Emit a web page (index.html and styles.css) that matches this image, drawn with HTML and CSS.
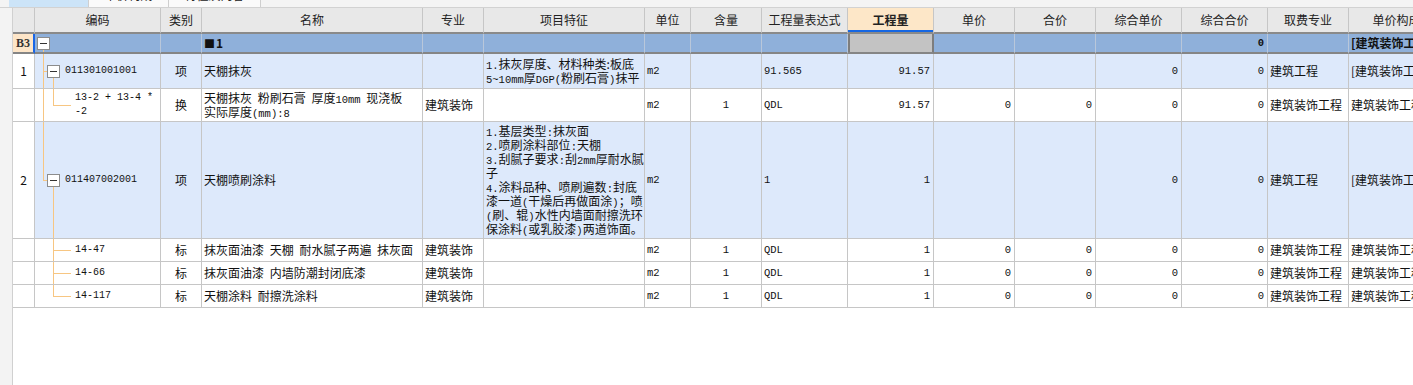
FILE: index.html
```html
<!DOCTYPE html>
<html lang="zh-CN">
<head>
<meta charset="utf-8">
<title>清单</title>
<link rel="stylesheet" href="styles.css">
</head>
<body>
<div class="top">
  <div class="tab t1 on"></div>
  <div class="tab t2"><span>单价构成</span></div>
  <div class="tab t3"><span>特征及内容</span></div>
</div>
<div class="main">
  <div class="gutter"></div>
  <div class="wrap">
    <div class="grid">
      <div class="row hd">
        <div class="c rn"></div>
        <div class="c">编码</div>
        <div class="c">类别</div>
        <div class="c">名称</div>
        <div class="c">专业</div>
        <div class="c">项目特征</div>
        <div class="c">单位</div>
        <div class="c">含量</div>
        <div class="c">工程量表达式</div>
        <div class="c hl">工程量</div>
        <div class="c">单价</div>
        <div class="c">合价</div>
        <div class="c">综合单价</div>
        <div class="c">综合合价</div>
        <div class="c">取费专业</div>
        <div class="c">单价构成文件</div>
      </div>

      <div class="row b3">
        <div class="c rn">B3</div>
        <div class="c tr l0"><span class="tg"></span></div>
        <div class="c"></div>
        <div class="c"><span class="blk">■</span>1</div>
        <div class="c"></div>
        <div class="c"></div>
        <div class="c"></div>
        <div class="c"></div>
        <div class="c"></div>
        <div class="c sel"></div>
        <div class="c"></div>
        <div class="c"></div>
        <div class="c"></div>
        <div class="c rt a">0</div>
        <div class="c"></div>
        <div class="c">[建筑装饰工程]</div>
      </div>

      <div class="row p">
        <div class="c rn">1</div>
        <div class="c tr l1"><span class="tg"></span><span class="cd">011301001001</span></div>
        <div class="c ctr">项</div>
        <div class="c">天棚抹灰</div>
        <div class="c"></div>
        <div class="c"><div class="ml"><span class="a">1.</span>抹灰厚度、材料种类:板底<br><span class="a">5~10mm</span>厚<span class="a">DGP(</span>粉刷石膏<span class="a">)</span>抹平</div></div>
        <div class="c a">m2</div>
        <div class="c"></div>
        <div class="c a">91.565</div>
        <div class="c rt a">91.57</div>
        <div class="c"></div>
        <div class="c"></div>
        <div class="c rt a">0</div>
        <div class="c rt a">0</div>
        <div class="c">建筑工程</div>
        <div class="c">[建筑装饰工程]</div>
      </div>

      <div class="row">
        <div class="c rn"></div>
        <div class="c tr l2"><div class="cd">13-2 + 13-4 *<br>-2</div></div>
        <div class="c ctr">换</div>
        <div class="c nm"><div class="ml">天棚抹灰 粉刷石膏 厚度<span class="a">10mm</span> 现浇板<br>实际厚度<span class="a">(mm):8</span></div></div>
        <div class="c">建筑装饰</div>
        <div class="c"></div>
        <div class="c a">m2</div>
        <div class="c ctr a">1</div>
        <div class="c a">QDL</div>
        <div class="c rt a">91.57</div>
        <div class="c rt a">0</div>
        <div class="c rt a">0</div>
        <div class="c rt a">0</div>
        <div class="c rt a">0</div>
        <div class="c">建筑装饰工程</div>
        <div class="c">建筑装饰工程</div>
      </div>

      <div class="row p">
        <div class="c rn">2</div>
        <div class="c tr l3"><span class="tg"></span><span class="cd">011407002001</span></div>
        <div class="c ctr">项</div>
        <div class="c">天棚喷刷涂料</div>
        <div class="c"></div>
        <div class="c"><div class="ml"><span class="a">1.</span>基层类型<span class="a">:</span>抹灰面<br><span class="a">2.</span>喷刷涂料部位<span class="a">:</span>天棚<br><span class="a">3.</span>刮腻子要求<span class="a">:</span>刮<span class="a">2mm</span>厚耐水腻<br>子<br><span class="a">4.</span>涂料品种、喷刷遍数<span class="a">:</span>封底<br>漆一道<span class="a">(</span>干燥后再做面涂<span class="a">)</span>；喷<br><span class="a">(</span>刷、辊<span class="a">)</span>水性内墙面耐擦洗环<br>保涂料<span class="a">(</span>或乳胶漆<span class="a">)</span>两道饰面。</div></div>
        <div class="c a">m2</div>
        <div class="c"></div>
        <div class="c a">1</div>
        <div class="c rt a">1</div>
        <div class="c"></div>
        <div class="c"></div>
        <div class="c rt a">0</div>
        <div class="c rt a">0</div>
        <div class="c">建筑工程</div>
        <div class="c">[建筑装饰工程]</div>
      </div>

      <div class="row">
        <div class="c rn"></div>
        <div class="c tr l4"><span class="cd">14-47</span></div>
        <div class="c ctr">标</div>
        <div class="c nm">抹灰面油漆 天棚 耐水腻子两遍 抹灰面</div>
        <div class="c">建筑装饰</div>
        <div class="c"></div>
        <div class="c a">m2</div>
        <div class="c ctr a">1</div>
        <div class="c a">QDL</div>
        <div class="c rt a">1</div>
        <div class="c rt a">0</div>
        <div class="c rt a">0</div>
        <div class="c rt a">0</div>
        <div class="c rt a">0</div>
        <div class="c">建筑装饰工程</div>
        <div class="c">建筑装饰工程</div>
      </div>

      <div class="row">
        <div class="c rn"></div>
        <div class="c tr l4"><span class="cd">14-66</span></div>
        <div class="c ctr">标</div>
        <div class="c nm">抹灰面油漆 内墙防潮封闭底漆</div>
        <div class="c">建筑装饰</div>
        <div class="c"></div>
        <div class="c a">m2</div>
        <div class="c ctr a">1</div>
        <div class="c a">QDL</div>
        <div class="c rt a">1</div>
        <div class="c rt a">0</div>
        <div class="c rt a">0</div>
        <div class="c rt a">0</div>
        <div class="c rt a">0</div>
        <div class="c">建筑装饰工程</div>
        <div class="c">建筑装饰工程</div>
      </div>

      <div class="row">
        <div class="c rn"></div>
        <div class="c tr l5"><span class="cd">14-117</span></div>
        <div class="c ctr">标</div>
        <div class="c nm">天棚涂料 耐擦洗涂料</div>
        <div class="c">建筑装饰</div>
        <div class="c"></div>
        <div class="c a">m2</div>
        <div class="c ctr a">1</div>
        <div class="c a">QDL</div>
        <div class="c rt a">1</div>
        <div class="c rt a">0</div>
        <div class="c rt a">0</div>
        <div class="c rt a">0</div>
        <div class="c rt a">0</div>
        <div class="c">建筑装饰工程</div>
        <div class="c">建筑装饰工程</div>
      </div>
    </div>
  </div>
</div>
</body>
</html>
```

FILE: styles.css
```css
* { box-sizing: border-box; }
html, body { margin: 0; padding: 0; }
body {
  width: 1413px;
  height: 385px;
  overflow: hidden;
  background: #fff;
  font-family: "Noto Sans CJK SC", sans-serif;
  font-size: 12px;
  color: #111;
}

.top {
  height: 8px;
  background: #f4f4f4;
  border-bottom: 1px solid #d2d2d2;
  display: flex;
  padding-left: 9px;
}
.tab {
  height: 7px;
  overflow: hidden;
  display: flex;
  justify-content: center;
  align-items: flex-start;
  border-right: 1px solid #cfcfcf;
  background: #fafafa;
}
.tab.on { background: #cce4f8; }
.t1 { width: 80px; }
.t2 { width: 80px; }
.t3 { width: 92px; }
.tab span {
  line-height: 12px;
  margin-top: -11px;
  color: #222;
}

.main { display: flex; height: 377px; }
.gutter {
  width: 13px;
  flex: none;
  background: #f3f3f3;
  border-right: 1px solid #d0d0d0;
}
.wrap { flex: 1; min-width: 0; overflow: hidden; }

.grid {
  display: grid;
  grid-template-columns: 22px 126px 41px 221px 61px 161px 46px 71px 86px 86px 81px 81px 86px 86px 81px 120px;
  grid-template-rows: 26px 20px 35px 33px 117px 23px 23px 23px;
  width: max-content;
}
.row { display: contents; }

.c {
  min-width: 0;
  border-right: 1px solid #c6c6c6;
  border-bottom: 1px solid #c6c6c6;
  display: flex;
  align-items: center;
  padding: 0 2px;
  overflow: hidden;
  white-space: nowrap;
  line-height: 14px;
  background-color: #fff;
}
.rn { justify-content: center; }
.ctr { justify-content: center; }
.rt { justify-content: flex-end; padding-right: 3px; }
.a { font-family: "Liberation Mono", monospace; font-size: 10.5px; }
.cd { font-family: "Liberation Mono", monospace; font-size: 10px; }
.ml { line-height: 14px; }
.ml .a { line-height: 10px; }
.nm { word-spacing: 3px; }
.blk { font-size: 11px; margin-right: 1px; }

/* header */
.hd .c {
  background-color: #e8e8e8;
  border-bottom: 2px solid #8a8a8a;
  justify-content: center;
  color: #222;
}
.hd .hl {
  background-color: #fde7c8;
  font-weight: bold;
  box-shadow: inset 0 -2px 0 #1667e3;
}

/* group row */
.b3 .c {
  background-color: #8fb0da;
  border-bottom: 2px solid #858585;
  border-right-color: #b9c7da;
  font-weight: bold;
}
.b3 .rn {
  background-color: #fde5c8;
  border-right: 2px solid #1a66e6;
  font-family: "Liberation Serif", serif;
  color: #333;
}
.b3 .sel {
  background-color: #c3c3c3;
  border-right-color: #7d7d7d;
  box-shadow: inset 2px 0 0 #7d7d7d, inset -1px 0 0 #7d7d7d;
}

/* list item rows */
.p .c { background-color: #dde9fb; }
.p .rn { background-color: #fff; }

/* tree */
.tg {
  flex: none;
  width: 13px;
  height: 13px;
  border: 1px solid #8c8c8c;
  background: #fff linear-gradient(#333, #333) center / 7px 1px no-repeat;
}
.tg + span { margin-left: 5px; }

.tr {
  --o: #f7c682;
  background-repeat: no-repeat;
}
.l0 {
  padding-left: 2px;
  background-image: linear-gradient(var(--o), var(--o));
  background-position: 8px 100%;
  background-size: 1px 50%;
}
.l1 {
  padding-left: 12px;
  background-image: linear-gradient(var(--o), var(--o)), linear-gradient(var(--o), var(--o)), linear-gradient(var(--o), var(--o));
  background-position: 8px 0, 8px 50%, 18px 100%;
  background-size: 1px 100%, 5px 1px, 1px 50%;
}
.l2 {
  padding-left: 40px;
  background-image: linear-gradient(var(--o), var(--o)), linear-gradient(var(--o), var(--o)), linear-gradient(var(--o), var(--o));
  background-position: 8px 0, 18px 0, 18px 50%;
  background-size: 1px 100%, 1px 50%, 18px 1px;
}
.l3 {
  padding-left: 12px;
  background-image: linear-gradient(var(--o), var(--o)), linear-gradient(var(--o), var(--o)), linear-gradient(var(--o), var(--o));
  background-position: 8px 0, 8px 50%, 18px 100%;
  background-size: 1px 50%, 5px 1px, 1px 50%;
}
.l4 {
  padding-left: 40px;
  background-image: linear-gradient(var(--o), var(--o)), linear-gradient(var(--o), var(--o));
  background-position: 18px 0, 18px 50%;
  background-size: 1px 100%, 18px 1px;
}
.l5 {
  padding-left: 40px;
  background-image: linear-gradient(var(--o), var(--o)), linear-gradient(var(--o), var(--o));
  background-position: 18px 0, 18px 50%;
  background-size: 1px 50%, 18px 1px;
}
```
